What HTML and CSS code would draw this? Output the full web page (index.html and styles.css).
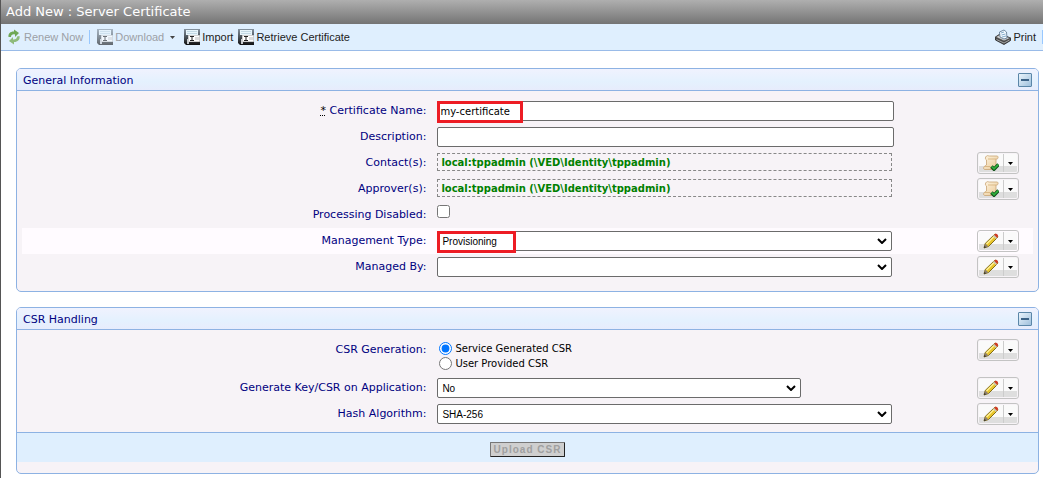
FILE: index.html
```html
<!DOCTYPE html>
<html lang="en">
<head>
<meta charset="utf-8">
<title>Add New : Server Certificate</title>
<link rel="stylesheet" href="styles.css">
</head>
<body>
<svg class="defs" aria-hidden="true">
  <defs>
    <linearGradient id="diskFill" x1="0" y1="0" x2="0" y2="1"><stop offset="0" stop-color="#8593a0"/><stop offset="1" stop-color="#111"/></linearGradient>
    <linearGradient id="paperFill" x1="0" y1="0" x2="1" y2="1"><stop offset="0" stop-color="#fff6e2"/><stop offset="1" stop-color="#e9c793"/></linearGradient>
    <symbol id="disk" viewBox="0 0 16 16">
      <path d="M0 0h16v16H2l-2-2z" fill="url(#diskFill)"/>
      <path d="M2 1h12v5H2z" fill="#e8f5fb"/><path d="M3 2.500h10M3 4.500h10" stroke="#c3d9e4"/>
      <path d="M3 10h2v5H3z" fill="#c8ccd0"/>
      <path d="M4.500 6.500h11v6h-11z" fill="#fff" stroke="#d0d0d0"/>
      <path d="M6 7.500h4M8 7.500v4M6 11.500h4" stroke="#222"/><path d="M11 8h4v3h-4z" fill="#dcdcdc"/>
    </symbol>
    <symbol id="pencil" viewBox="0 0 16 16">
      <path d="M1 15l1.200-4.500L11.500 1.500c1.500-1 4 .8 3 3L5.500 13.500z" fill="#e8c52c" stroke="#75600c" stroke-width=".9"/>
      <path d="M3.500 11L11.500 3" stroke="#fff29a" stroke-width="1.300"/>
      <path d="M11 2l1.200-1c1.500-.7 3.500 1 2.500 3L14 5z" fill="#d23b28"/>
      <path d="M10 3l3 3 1-1-3-3z" fill="#c5c9c5"/>
      <path d="M2.200 10.500l3.300 3L1 15z" fill="#8e8170"/><path d="M1 15l.5-2 1.500 1.300z" fill="#222"/>
    </symbol>
    <symbol id="scroll" viewBox="0 0 16 16">
      <path d="M3.500 1c1-.8 2 0 3 0H14c1.500 0 1.500 3-.3 3L13 4v7c0 2-1 3.500-3 3.500H1.500c-1.500-.5-1-3 .5-3.500l1.500-1V5C2 4.500 2 2 3.500 1z" fill="url(#paperFill)" stroke="#c9a574" stroke-width=".8"/>
      <path d="M5 4h8M2 11.500h5c1 0 1 2 .5 3" fill="none" stroke="#d0a970" stroke-width=".7"/>
      <path d="M8.500 11.500l2.500 2.700 4.500-4.700" fill="none" stroke="#12501b" stroke-width="3.400"/>
      <path d="M8.700 11.500l2.300 2.300 4.300-4.200" fill="none" stroke="#31b33c" stroke-width="1.700"/>
    </symbol>
    <symbol id="caret" viewBox="0 0 5 3"><path d="M0 0h5L2.500 3z"/></symbol>
  </defs>
</svg>
<header class="titlebar"><h1>Add New : Server Certificate</h1></header>
<nav class="toolbar" aria-label="Actions">
  <button class="tool renew" type="button" disabled>
    <svg width="14" height="16" viewBox="0 0 14 16"><path d="M1.500 8C1 4.500 3.500 2.300 7 2.500V.5L12 4 8 8V5.500C5.500 5 4 6 4 8z" fill="#6fa856"/><path d="M12.500 7c.7 3.500-1.500 6-5.500 6v2.500L2 12l4-4v2.500c2.500.3 4-1 4-3z" fill="#8fbb7b"/></svg>
    <span>Renew Now</span>
  </button>
  <span class="divider"></span>
  <button class="tool download" type="button" disabled>
    <svg class="faded" width="16" height="16"><use href="#disk"/></svg><span>Download</span><svg class="caret" width="5" height="3"><use href="#caret"/></svg>
  </button>
  <button class="tool" type="button"><svg width="16" height="16"><use href="#disk"/></svg><span>Import</span></button>
  <button class="tool" type="button"><svg width="16" height="16"><use href="#disk"/></svg><span>Retrieve Certificate</span></button>
  <button class="tool print" type="button">
    <svg width="16" height="16" viewBox="0 0 16 16"><path d="M.5 8L5 5l10.500 4v2.500L9 15.500.5 11z" fill="#4b4b4b" stroke="#222" stroke-width=".8"/><path d="M.5 8L5 5.500 15.500 9 9 12z" fill="#cfcfcf" stroke="#444" stroke-width=".7"/><path d="M4.500 3L9 1l2.500 2 .5 6-3 1-4-2z" fill="#f3f9ff" stroke="#55718c" stroke-width=".8"/><path d="M6 4l3-1M6.500 6l4-1M7 8l4-1" stroke="#6b99bd" stroke-width=".8"/><path d="M1.500 10.500L9 14l5.500-3" fill="none" stroke="#bbb" stroke-width=".8"/></svg>
    <span>Print</span>
  </button>
  <span class="divider"></span>
</nav>
<main>
  <section class="panel">
    <div class="panel-head"><h2>General Information</h2><button class="collapse" type="button" aria-label="Collapse General Information"></button></div>
    <div class="rows">
      <div class="row"><label for="name"><abbr title="Required">*</abbr> Certificate Name:</label>
        <div class="field"><input class="text" id="name" type="text" value="my-certificate"><span class="mark mark-name"></span></div></div>
      <div class="row"><label for="desc">Description:</label><div class="field"><input class="text" id="desc" type="text"></div></div>
      <div class="row"><span class="label">Contact(s):</span><div class="field"><output class="identity">local:tppadmin (\VED\Identity\tppadmin)</output></div>
        <div class="split"><button type="button" aria-label="Select contact"><svg width="16" height="16"><use href="#scroll"/></svg></button><button type="button" aria-label="Contact options"><svg width="5" height="3"><use href="#caret"/></svg></button></div></div>
      <div class="row"><span class="label">Approver(s):</span><div class="field"><output class="identity">local:tppadmin (\VED\Identity\tppadmin)</output></div>
        <div class="split"><button type="button" aria-label="Select approver"><svg width="16" height="16"><use href="#scroll"/></svg></button><button type="button" aria-label="Approver options"><svg width="5" height="3"><use href="#caret"/></svg></button></div></div>
      <div class="row"><label for="disabled">Processing Disabled:</label><div class="field check"><input id="disabled" type="checkbox"></div></div>
      <div class="row active"><label for="mgmt">Management Type:</label>
        <div class="field"><select id="mgmt"><option>Provisioning</option></select><svg class="chevron" width="10" height="6" viewBox="0 0 10 6"><path d="M1 1l4 4 4-4"/></svg><span class="mark mark-type"></span></div>
        <div class="split"><button type="button" aria-label="Edit management type"><svg width="16" height="16"><use href="#pencil"/></svg></button><button type="button" aria-label="Management type options"><svg width="5" height="3"><use href="#caret"/></svg></button></div></div>
      <div class="row"><label for="managed">Managed By:</label>
        <div class="field"><select id="managed"><option></option></select><svg class="chevron" width="10" height="6" viewBox="0 0 10 6"><path d="M1 1l4 4 4-4"/></svg></div>
        <div class="split"><button type="button" aria-label="Edit managed by"><svg width="16" height="16"><use href="#pencil"/></svg></button><button type="button" aria-label="Managed by options"><svg width="5" height="3"><use href="#caret"/></svg></button></div></div>
    </div>
  </section>
  <section class="panel">
    <div class="panel-head"><h2>CSR Handling</h2><button class="collapse" type="button" aria-label="Collapse CSR Handling"></button></div>
    <div class="rows csr">
      <div class="row tall"><span class="label" id="gen">CSR Generation:</span>
        <div class="field radios" role="radiogroup" aria-labelledby="gen">
          <label><input type="radio" name="gen" checked>Service Generated CSR</label>
          <label><input type="radio" name="gen">User Provided CSR</label>
        </div>
        <div class="split"><button type="button" aria-label="Edit CSR generation"><svg width="16" height="16"><use href="#pencil"/></svg></button><button type="button" aria-label="CSR generation options"><svg width="5" height="3"><use href="#caret"/></svg></button></div></div>
      <div class="row"><label for="app">Generate Key/CSR on Application:</label>
        <div class="field short"><select id="app"><option>No</option></select><svg class="chevron" width="10" height="6" viewBox="0 0 10 6"><path d="M1 1l4 4 4-4"/></svg></div>
        <div class="split"><button type="button" aria-label="Edit key generation"><svg width="16" height="16"><use href="#pencil"/></svg></button><button type="button" aria-label="Key generation options"><svg width="5" height="3"><use href="#caret"/></svg></button></div></div>
      <div class="row"><label for="hash">Hash Algorithm:</label>
        <div class="field"><select id="hash"><option>SHA-256</option></select><svg class="chevron" width="10" height="6" viewBox="0 0 10 6"><path d="M1 1l4 4 4-4"/></svg></div>
        <div class="split"><button type="button" aria-label="Edit hash algorithm"><svg width="16" height="16"><use href="#pencil"/></svg></button><button type="button" aria-label="Hash algorithm options"><svg width="5" height="3"><use href="#caret"/></svg></button></div></div>
    </div>
    <div class="actions"><button class="upload" type="button" disabled>Upload CSR</button></div>
  </section>
</main>
</body>
</html>
```
FILE: styles.css
```css
* { box-sizing: border-box; }
body {
  margin: 0;
  min-height: 100vh;
  border-left: 1px solid #555;
  background: #fff;
  font-family: Verdana, "DejaVu Sans", sans-serif;
  font-size: 11px;
}
svg { display: block; flex: none; }
.defs { position: absolute; width: 0; height: 0; }
h1, h2 { margin: 0; font-weight: 400; }
button { font: inherit; margin: 0; padding: 0; border: 0; background: none; }

.titlebar {
  display: flex;
  align-items: center;
  height: 24px;
  padding-left: 5px;
  background: linear-gradient(#afafaf, #747474);
}
.titlebar h1 { color: #fff; font-size: 13px; line-height: 24px; }

.toolbar {
  display: flex;
  align-items: center;
  height: 27px;
  padding-left: 6px;
  border-bottom: 1px solid #99bbe8;
  background: #dfeffe;
  font-family: Arial, "Liberation Sans", sans-serif;
  font-size: 11px;
}
.tool { display: flex; align-items: center; gap: 2px; color: #222; margin-right: 5px; }
.tool:disabled { color: #9ca0a6; }
.renew { gap: 3px; margin-right: 6px; }
.download { margin: 0 9px 0 7px; }
.faded { opacity: .6; }
.caret { margin-left: 4px; fill: #444; }
.print { margin: 0 6px 0 auto; }
.divider { width: 1px; height: 14px; background: #98c8ff; }

main { display: grid; gap: 15px; padding: 17px 4px 4px 15px; }
.panel { border: 1px solid #8db2e3; border-radius: 5px; background: #f7f3f7; overflow: hidden; }
.panel-head {
  display: flex;
  align-items: center;
  justify-content: space-between;
  height: 22px;
  padding: 0 6px;
  border-bottom: 1px solid #8db2e3;
  background: linear-gradient(#f0f2fe, #e4f1fe 60%, #e7ecfc);
}
.panel-head h2 { padding-top: 2px; color: #000080; font-size: 11px; }
.collapse {
  width: 14px;
  height: 14px;
  border: 1px solid #5b86a8;
  border-radius: 1px;
  background: linear-gradient(#3c6286, #3c6286) center / 8px 2px no-repeat, linear-gradient(135deg, #eaf4fc, #9fc0dc);
}

.rows { padding: 7px 5px 11px; }
.csr { padding-bottom: 5px; }
.row {
  display: grid;
  grid-template-columns: 40% 45% 1fr;
  min-height: 26px;
  color: #000080;
}
.row > label, .label { text-align: right; line-height: 26px; }
.row abbr { color: #000; }
.active { background: #fffbff; }
.tall { min-height: 38px; }
.field { position: relative; margin: 3px -11px 0 11px; }
.short { width: 80%; }
.text, select {
  display: block;
  width: 100%;
  height: 20px;
  margin: 0;
  border: 1px solid #6b6b6b;
  border-radius: 2px;
  background: #fff;
  color: #000;
  font-family: inherit;
  font-size: 10px;
}
.text { padding: 1px 2px; width: calc(100% + 2px); }
select { appearance: none; padding: 0 4px; font-family: Arial, "Liberation Sans", sans-serif; }
.chevron { position: absolute; right: 5px; top: 7px; fill: none; stroke: #000; stroke-width: 2; pointer-events: none; }
.identity {
  display: block;
  height: 18px;
  padding: 0 3px;
  border: 1px dashed #888;
  color: #008000;
  font-size: 10px;
  font-weight: 700;
  line-height: 18px;
}
.mark { position: absolute; top: 0; left: 0; height: 22px; border: 3px solid #ed1c24; pointer-events: none; }
.mark-name { width: 86px; }
.mark-type { width: 79px; }
.check input { display: block; width: 13px; height: 13px; margin: 0; }
.radios label { display: flex; align-items: center; gap: 3px; height: 15px; color: #000; font-size: 10px; }
.radios { padding-top: 1px; }
.radios input { width: 13px; height: 13px; margin: 0 0 0 2px; }

.split {
  display: flex;
  justify-self: end;
  align-items: center;
  width: 42px;
  height: 22px;
  margin: 2px 14px 0 0;
  padding: 1px;
  border: 1px solid #c3c3c3;
  border-radius: 3px;
  background: linear-gradient(#fafafa 0 65%, #dedede 65%);
  background-clip: content-box;
  background-color: #fafafa;
}
.split button { display: flex; align-items: center; justify-content: center; height: 18px; flex: 1; }
.split button:first-child { flex: none; width: 25px; border-right: 1px solid #ccc; }

.actions {
  display: flex;
  align-items: center;
  justify-content: center;
  height: 30px;
  margin-bottom: 11px;
  padding-top: 4px;
  border-top: 1px solid #8db2e3;
  background: #dfeffe;
}
.upload {
  width: 75px;
  height: 15px;
  border: 1px solid;
  border-color: #777 #222 #222 #777;
  border-radius: 1px;
  background: #cfcfcf;
  color: #a0a0a0;
  font-family: Arial, "Liberation Sans", sans-serif;
  font-size: 10px;
  font-weight: 700;
  line-height: 12px;
  letter-spacing: 1px;
}
```
